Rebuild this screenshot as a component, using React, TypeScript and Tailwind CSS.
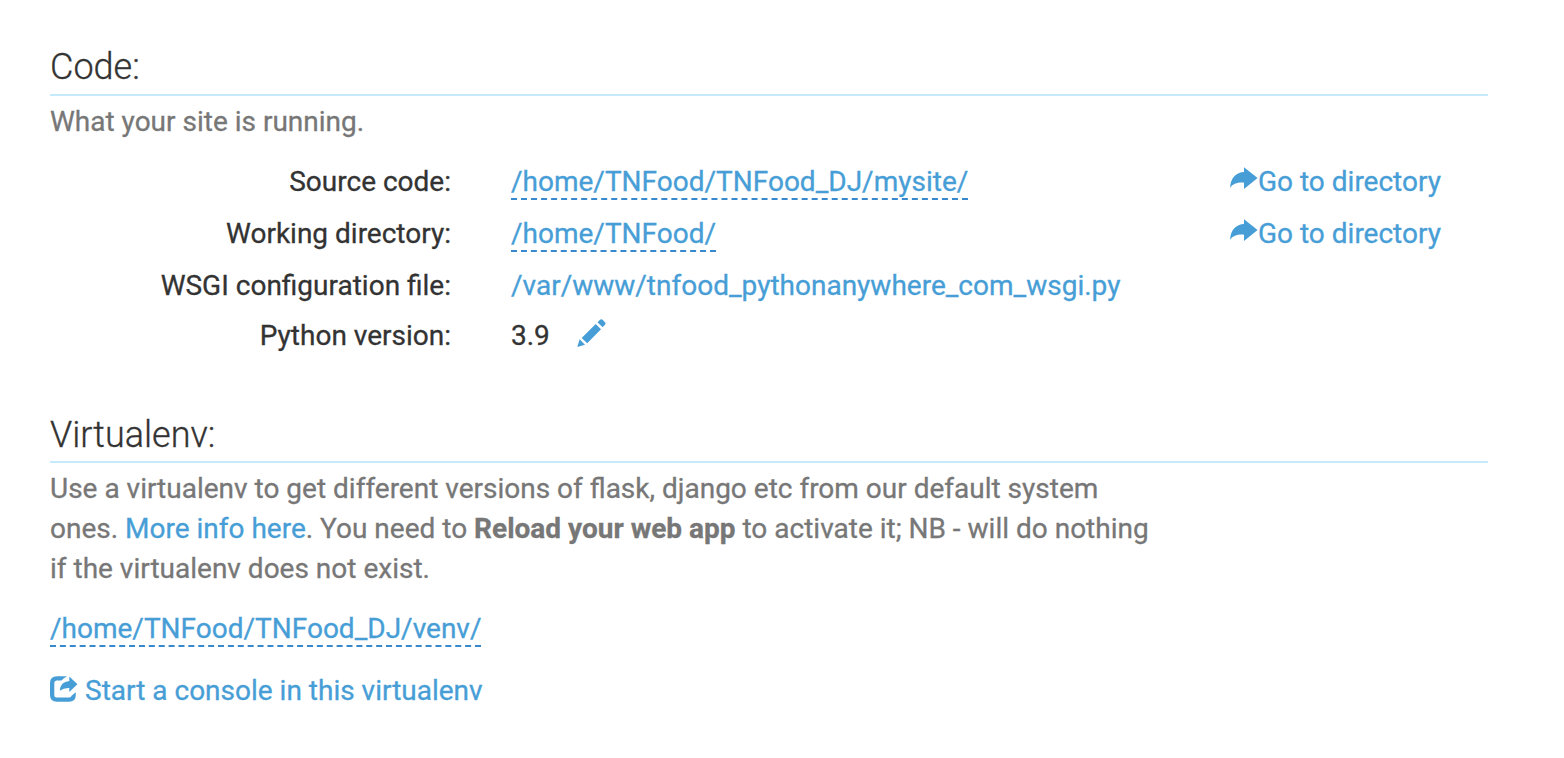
import React from "react";

const link = "text-[#479ed6]";

function Share() {
  return (
    <svg className="mt-[3px] h-7 w-7 shrink-0" viewBox="0 0 28 28" fill="currentColor">
      <path d="M14 2.2 27.6 13 14 24V17.7C8 17.2 3 18.5 .2 22.9 .2 12.5 6.5 7.2 14 6.9Z" />
    </svg>
  );
}

function Row({ label, top, children, action }: { label: string; top: string; children: React.ReactNode; action?: boolean }) {
  return (
    <div className={"flex " + top}>
      <div className="w-[401px] shrink-0 text-right text-[#333]">{label}</div>
      <div className="ml-[60px] w-[719px] shrink-0">{children}</div>
      {action && (
        <a className={"flex h-10 items-start " + link}>
          <Share />
          <span>Go to directory</span>
        </a>
      )}
    </div>
  );
}

function Path({ children }: { children: string }) {
  return <a className="mb-px inline-block h-[38px] border-b-2 border-dashed border-[#3788cc] align-top text-[#479ed6]">{children}</a>;
}

export default function App() {
  return (
    <main className="h-[758px] w-[1564px] overflow-hidden bg-white pl-[50px] pr-[76px] pt-[47px] font-['Roboto',sans-serif] text-[28px] leading-10 text-[#777] [-webkit-text-stroke:0.3px]">
      <h2 className="h-[49px] border-b-2 border-[#c5e9fd] text-[36px] font-light text-[#333]">Code:</h2>
      <p className="mt-[6px]">What your site is running.</p>
      <Row label="Source code:" top="mt-5" action><Path>/home/TNFood/TNFood_DJ/mysite/</Path></Row>
      <Row label="Working directory:" top="mt-3" action><Path>/home/TNFood/</Path></Row>
      <Row label="WSGI configuration file:" top="mt-3"><a className={link}>/var/www/tnfood_pythonanywhere_com_wsgi.py</a></Row>
      <Row label="Python version:" top="mt-[10px]">
        <span className="flex items-start text-[#333]">3.9
          <svg className="ml-[27.5px] mt-[3px] h-7 w-[29px] text-[#479ed6]" viewBox="0 0 29 28" fill="currentColor">
            <path d="M.3 28 2.6 20.3 8 25.7ZM4.7 19 18.7 5 24 10.2 10.2 24.3ZM20.5 3.2 23 .8Q24.4-.4 25.6.8L28 3.3Q29 4.5 28 5.7L25.6 8.3Z" />
          </svg>
        </span>
      </Row>
      <h2 className="mt-[59px] h-[48px] border-b-2 border-[#c5e9fd] text-[36px] font-light text-[#333]">Virtualenv:</h2>
      <p className="mt-[6px]">
        Use a virtualenv to get different versions of flask, django etc from our default system<br />
        ones. <a className={link}>More info here</a>. You need to <b className="font-bold">Reload your web app</b> to activate it; NB - will do nothing<br />
        if the virtualenv does not exist.
      </p>
      <div className="mt-5 flex h-[39px]"><Path>/home/TNFood/TNFood_DJ/venv/</Path></div>
      <a className={"mt-[23px] flex items-start " + link}>
        <svg className="mr-[7px] mt-1 h-7 w-7" viewBox="0 0 28 28" fill="currentColor">
          <path d="M17 1.2H7Q0 1.2 0 8V20Q0 26.8 7 26.8H19Q25.8 26.8 25.8 20V17.2L21.5 20.8Q21.3 22.5 19.3 22.5H6.5Q4.3 22.5 4.3 20V8Q4.3 5.5 6.5 5.5H11.5Q13.5 3 17 1.2Z" />
          <path d="M19.3 1.6 27.4 9.3 19.3 17V13Q14 12.6 9.8 15.8 10.2 6.8 19.3 6Z" />
        </svg>
        <span>Start a console in this virtualenv</span>
      </a>
    </main>
  );
}
